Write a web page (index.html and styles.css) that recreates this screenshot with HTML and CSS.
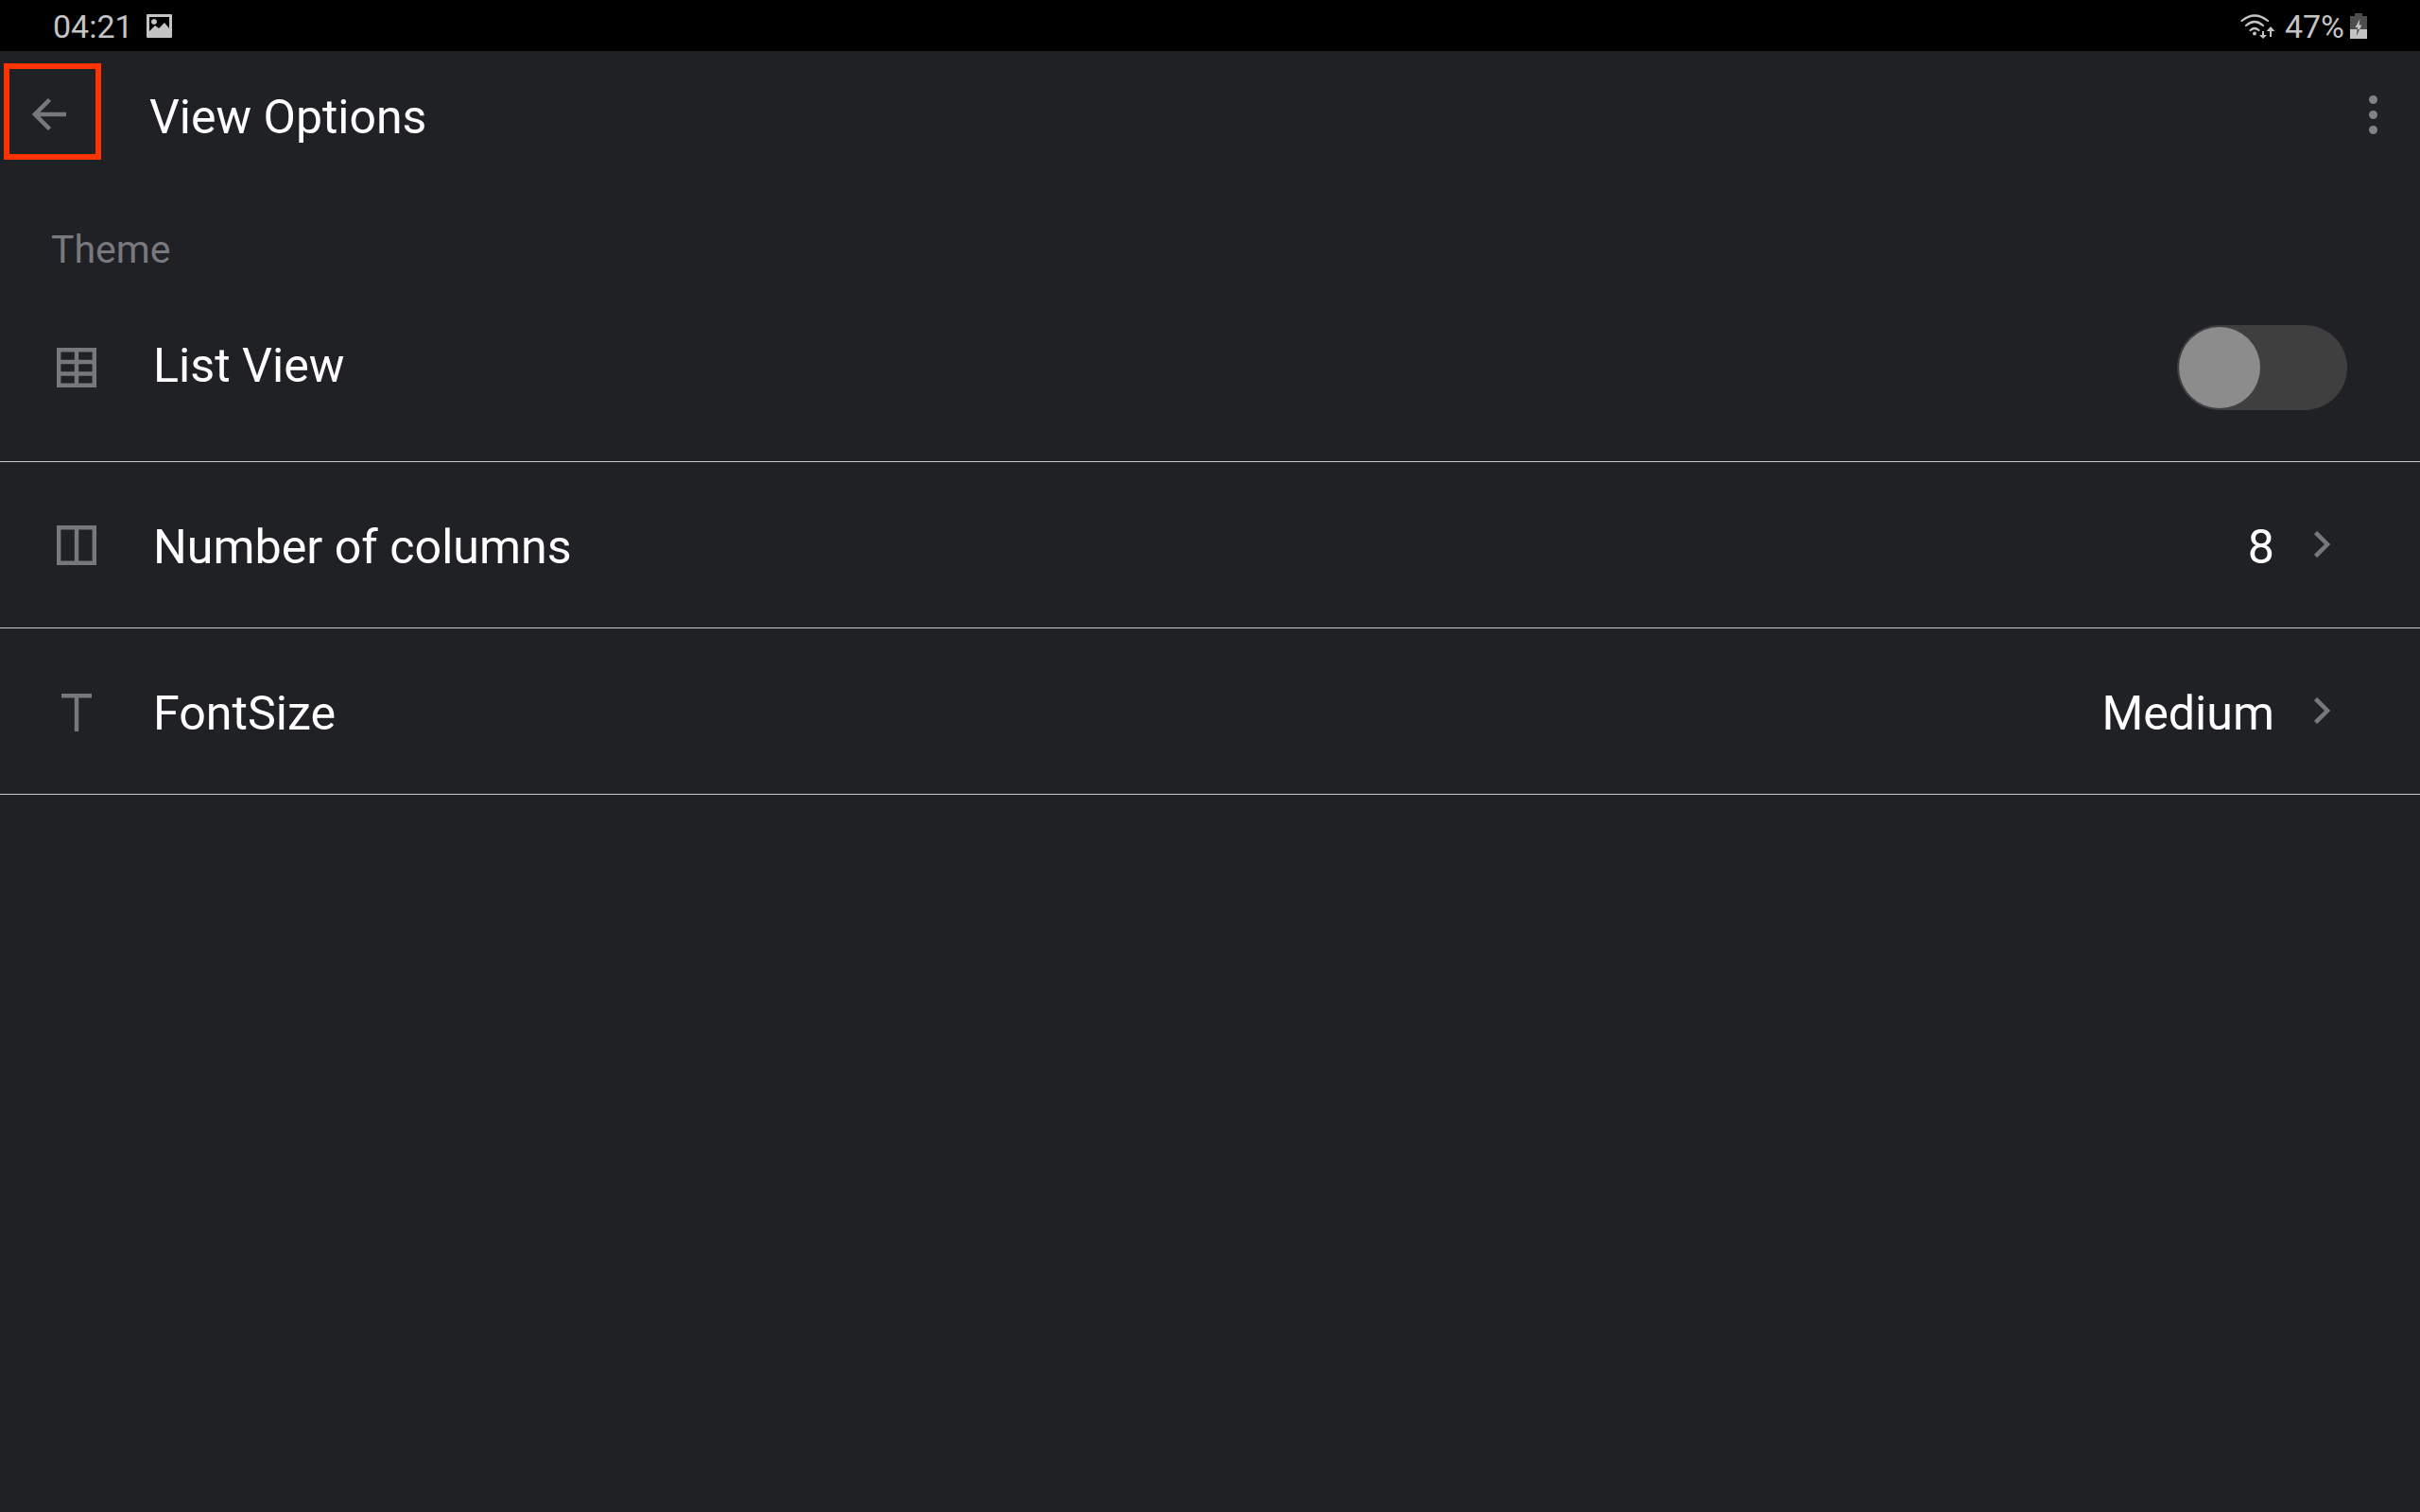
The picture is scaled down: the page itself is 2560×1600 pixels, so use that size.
FILE: index.html
```html
<!DOCTYPE html>
<html lang="en">
<head>
    <meta charset="UTF-8">
    <meta name="viewport" content="width=device-width, initial-scale=1.0">
    <title>View Options</title>
    <link rel="stylesheet" href="styles.css">
</head>
<body>
    <div class="status-bar">
        <div class="status-left">
            <span class="status-text">04:21</span>
            <svg class="status-image" viewBox="0 0 27 25">
                <path fill="#c4c4c4" fill-rule="evenodd" d="M1 0H26Q27 0 27 1V24Q27 25 26 25H1Q0 25 0 24V1Q0 0 1 0ZM3 3V18L9 12L13 15L19 9L24 15V3ZM8 5A3 3 0 1 1 7.990 5Z"/>
            </svg>
        </div>
        <div class="status-right">
            <svg class="status-wifi" viewBox="0 0 37 27">
                <g fill="none" stroke="#c4c4c4" stroke-width="2.200" stroke-linecap="round">
                    <path d="M1.500 8Q15 -3 29 8"/>
                    <path d="M6 13Q15 5 24 13"/>
                    <path d="M10.500 18Q15 14 19.500 18"/>
                </g>
                <circle cx="15" cy="21.500" r="2" fill="#c4c4c4"/>
                <path fill="#c4c4c4" d="M23 19H25V23H28L24 27L20 23H23ZM32 14L36.500 19H33V25H31V19H27.500Z"/>
            </svg>
            <span class="status-text">47%</span>
            <svg class="status-battery" viewBox="0 0 18 27">
                <path fill="#4d4d4d" d="M5 0H13V3H18V17H0V3H5Z"/>
                <path fill="#c4c4c4" d="M0 17H18V27H0Z"/>
                <path fill="#c4c4c4" d="M10.500 6L5.500 15H8.500L7.500 17H10L12.500 12.500H9.500Z"/>
                <path fill="#4d4d4d" d="M7.500 17H10L7 24Z"/>
            </svg>
        </div>
    </div>

    <header class="toolbar">
        <div class="back-button">
            <svg class="back-icon" viewBox="0 0 36 34">
                <path fill="none" stroke="#77787c" stroke-width="4.500" d="M18.500 1.500L3 17L18.500 32.500M3 17H36"/>
            </svg>
        </div>
        <h1 class="toolbar-title">View Options</h1>
        <svg class="more-icon" viewBox="0 0 9 41">
            <circle cx="4.500" cy="4.500" r="4.500" fill="#818286"/>
            <circle cx="4.500" cy="20.500" r="4.500" fill="#818286"/>
            <circle cx="4.500" cy="36.500" r="4.500" fill="#818286"/>
        </svg>
    </header>
    <div class="highlight-box"></div>

    <h2 class="section-label">Theme</h2>

    <div class="row row-first">
        <svg class="row-icon" viewBox="0 0 42 42">
            <path fill="none" stroke="#77787c" stroke-width="4.400" d="M2.200 2.200H39.800V39.800H2.200ZM2.200 15H39.800M2.200 27.500H39.800M21 2.200V39.800"/>
        </svg>
        <span class="row-label">List View</span>
        <div class="toggle"><div class="toggle-knob"></div></div>
    </div>

    <div class="row">
        <svg class="row-icon" viewBox="0 0 42 42">
            <path fill="none" stroke="#77787c" stroke-width="4.400" d="M2.200 2.200H39.800V39.800H2.200ZM21 2.200V39.800"/>
        </svg>
        <span class="row-label">Number of columns</span>
        <div class="row-value">
            <span class="row-value-text">8</span>
            <svg class="chevron" viewBox="0 0 17 28">
                <path fill="none" stroke="#77787c" stroke-width="4.500" d="M1.500 1.500L14 14L1.500 26.500"/>
            </svg>
        </div>
    </div>

    <div class="row">
        <svg class="row-icon" viewBox="0 0 42 42">
            <path fill="none" stroke="#77787c" stroke-width="4.400" d="M5 4.200H37M21 4.200V42"/>
        </svg>
        <span class="row-label">FontSize</span>
        <div class="row-value">
            <span class="row-value-text">Medium</span>
            <svg class="chevron" viewBox="0 0 17 28">
                <path fill="none" stroke="#77787c" stroke-width="4.500" d="M1.500 1.500L14 14L1.500 26.500"/>
            </svg>
        </div>
    </div>
</body>
</html>
```

FILE: styles.css
```css
body {
    margin: 0;
    min-height: 1600px;
    background-color: #202125;
    color: #fff;
    font-family: Roboto, 'Liberation Sans', sans-serif;
}
.status-bar {
    height: 54px;
    background-color: #000;
    display: flex;
    justify-content: space-between;
    align-items: center;
    padding: 0 56px;
}
.status-left, .status-right {
    display: flex;
    align-items: center;
}
.status-text {
    font-size: 34px;
    padding-top: 2px;
    color: #c4c4c4;
}
.status-image {
    width: 27px;
    height: 25px;
    margin-left: 14px;
}
.status-wifi {
    width: 37px;
    height: 27px;
    margin-right: 10px;
}
.status-battery {
    width: 18px;
    height: 27px;
    margin-left: 6px;
}
.toolbar {
    height: 138px;
    display: flex;
    align-items: center;
    padding-right: 45px;
}
.back-button {
    width: 158px;
    padding-left: 34px;
    box-sizing: border-box;
}
.back-icon {
    display: block;
    width: 36px;
    height: 34px;
    margin-top: -4px;
}
.toolbar-title {
    flex: 1;
    margin: 0;
    padding-top: 2px;
    font-size: 50px;
    font-weight: 400;
}
.more-icon {
    width: 9px;
    height: 41px;
    margin-top: -4px;
}
.highlight-box {
    position: absolute;
    left: 4px;
    top: 67px;
    width: 91px;
    height: 90px;
    border: 6px solid #ff3300;
}
.section-label {
    margin: 0;
    height: 98px;
    padding-left: 54px;
    font-size: 41px;
    font-weight: 400;
    line-height: 145px;
    color: #78797c;
    box-sizing: border-box;
    overflow: hidden;
}
.row {
    height: 176px;
    box-sizing: border-box;
    display: flex;
    align-items: center;
    padding: 0 77px 0 60px;
    border-bottom: 1px solid #c8c8c8;
    font-size: 50.2px;
}
.row-first {
    height: 199px;
}
.row-icon {
    width: 42px;
    height: 42px;
    margin-right: 60px;
}
.row-label {
    flex: 1;
    padding-top: 4px;
}
.row-first .row-label {
    padding-top: 0;
    padding-bottom: 6px;
}
.row-value {
    display: flex;
    align-items: center;
}
.row-value-text {
    padding-top: 4px;
}
.chevron {
    width: 17px;
    height: 28px;
    margin: -2px 18px 0 42px;
}
.toggle {
    width: 180px;
    height: 90px;
    padding: 2px;
    box-sizing: border-box;
    border-radius: 45px;
    background-color: #3f3f3f;
}
.toggle-knob {
    width: 86px;
    height: 86px;
    border-radius: 50%;
    background-color: #8c8c8c;
}
```
